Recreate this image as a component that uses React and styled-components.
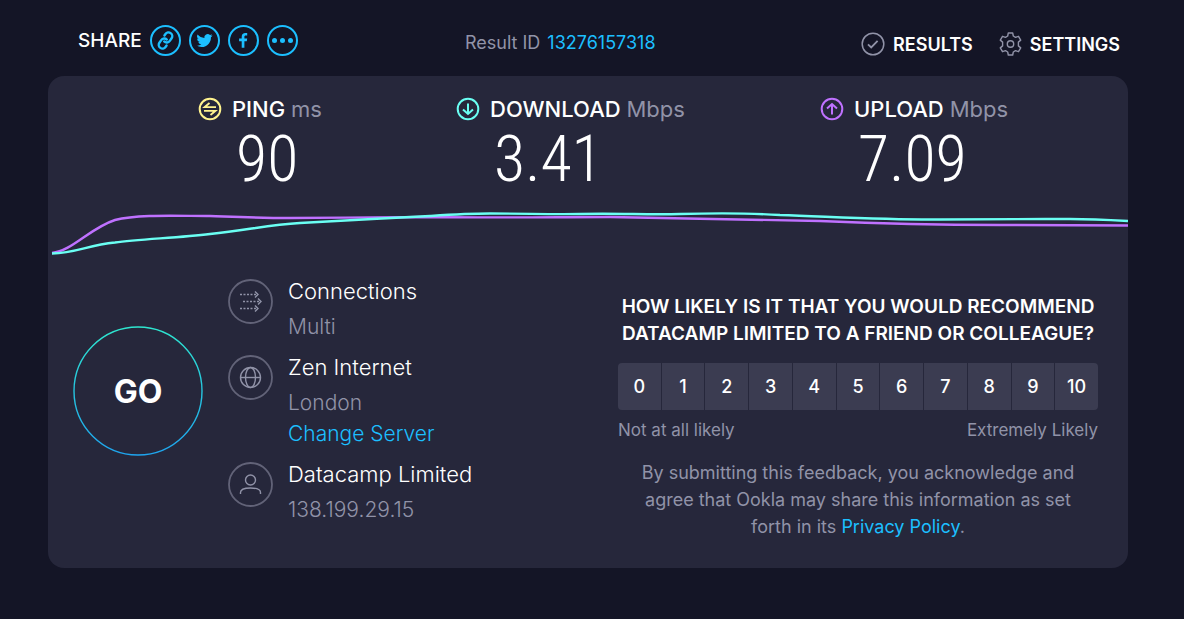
import React from "react";
import styled, { createGlobalStyle } from "styled-components";

const Global = createGlobalStyle`
  * { box-sizing: border-box; }
  body { margin: 0; background: #141526; color: #fff; font-family: Inter, "Liberation Sans", sans-serif; }
  button { font: inherit; color: inherit; background: none; border: 0; padding: 0; cursor: pointer; }
  a { color: #1cbfff; text-decoration: none; }
  h2, p { margin: 0; }
  svg { display: block; flex: none; }
`;

const Page = styled.main`
  min-height: 100vh;
  padding: 0 56px 51px 48px;
`;

const TopBar = styled.header`
  display: grid;
  grid-template-columns: 5fr auto 6fr;
  align-items: center;
  height: 76px;
  padding: 8px 8px 0 30px;
`;

const Share = styled.div`
  display: flex;
  align-items: center;
  gap: 8px;
  font-size: 19px;
  font-weight: 500;
  padding-bottom: 4px;
`;

const ShareButton = styled.button`
  width: 31px;
  height: 31px;
  color: #1cbfff;
`;

const ResultId = styled.p`
  display: flex;
  gap: 7px;
  font-size: 18px;
  color: #9193a8;
`;

const Nav = styled.nav`
  display: flex;
  justify-content: flex-end;
  gap: 26px;
  padding-top: 4px;
`;

const NavLink = styled.a`
  display: flex;
  align-items: center;
  gap: 8px;
  font-size: 18px;
  font-weight: 600;
  color: #fff;
  svg { color: #9193a8; }
`;

const Panel = styled.section`
  background: #26273b;
  border-radius: 16px;
  overflow: hidden;
  padding-bottom: 28px;
`;

const Metrics = styled.div`
  display: grid;
  grid-template-columns: 258fr 364fr 308fr;
  padding: 20px 0 0 150px;
`;

const MetricName = styled.div`
  display: flex;
  align-items: center;
  gap: 10px;
  font-size: 22px;
  line-height: 26px;
  font-weight: 500;
`;

const Unit = styled.span`
  color: #9193a8;
  font-weight: 400;
`;

const Value = styled.div`
  padding-left: 38px;
  font-family: "Roboto Condensed Light", "Roboto Condensed", Roboto, sans-serif;
  font-weight: 100;
  font-size: 64px;
  line-height: 76px;
`;

const Chart = styled.svg`
  width: 100%;
  height: 70px;
`;

const Lower = styled.div`
  display: grid;
  grid-template-columns: 180px 1fr 480px;
  padding: 1px 30px 0 0;
`;

const GoButton = styled.button`
  display: grid;
  place-items: center;
  width: 130px;
  height: 130px;
  margin: 57px 0 0 25px;
  font-size: 32px;
  font-weight: 700;
  svg, span { grid-area: 1 / 1; }
`;

const Details = styled.div`
  display: flex;
  flex-direction: column;
  gap: 10px;
  padding-top: 7px;
`;

const Detail = styled.div`
  display: flex;
  gap: 15px;
  svg { margin-top: 3px; color: #9193a8; }
`;

const DetailText = styled.div`
  font-size: 22px;
  line-height: 31px;
  font-weight: 300;
  a { font-size: 21px; }
`;

const DetailSub = styled.div`
  color: #9193a8;
  padding-top: 4px;
  font-size: 21px;
`;

const Survey = styled.div`
  text-align: center;
  padding-top: 24px;
`;

const Question = styled.h2`
  font-size: 19px;
  line-height: 27px;
  font-weight: 600;
`;

const Scale = styled.div`
  display: grid;
  grid-template-columns: repeat(11, 1fr);
  gap: 1px;
  margin-top: 16px;
  border-radius: 4px;
  overflow: hidden;
`;

const Score = styled.button`
  height: 47px;
  background: #3b3c51;
  font-size: 18px;
  font-weight: 500;
`;

const ScaleEnds = styled.div`
  display: flex;
  justify-content: space-between;
  padding-top: 8px;
  font-size: 17px;
  line-height: 24px;
  color: #9193a8;
`;

const Notice = styled.p`
  padding: 17px 16px 0;
  font-size: 18px;
  line-height: 27px;
  color: #9193a8;
`;

const ShareIcon = ({ children }) => (
  <svg width="31" height="31" viewBox="0 0 31 31" fill="none" stroke="currentColor" strokeWidth="2" aria-hidden="true">
    <circle cx="15.5" cy="15.5" r="14.5" />
    {children}
  </svg>
);

const MetricIcon = ({ color, children }) => (
  <svg width="24" height="24" viewBox="0 0 24 24" fill="none" stroke={color} strokeWidth="2" aria-hidden="true">
    <circle cx="12" cy="12" r="10.3" />
    {children}
  </svg>
);

const DetailIcon = ({ children }) => (
  <svg width="45" height="45" viewBox="0 0 45 45" fill="none" stroke="currentColor" strokeWidth="1.4" aria-hidden="true">
    <circle cx="22.5" cy="22.5" r="21.5" stroke="#626378" strokeWidth="1.8" />
    {children}
  </svg>
);

const metrics = [
  { name: "PING", unit: "ms", value: "90", color: "#fff38e",
    icon: <path d="M18 10.200H6.500L11.500 6M6 13.800h11.500L12.500 18" strokeWidth="1.8" /> },
  { name: "DOWNLOAD", unit: "Mbps", value: "3.41", color: "#6afff3",
    icon: <path d="M12 6.500v11M7 12.500l5 4.500 5-4.500" /> },
  { name: "UPLOAD", unit: "Mbps", value: "7.09", color: "#bf71ff",
    icon: <path d="M12 17.500v-11M7 11.500l5-4.500 5 4.500" /> },
];

const shares = [
  { label: "Copy link", icon: (
    <g transform="rotate(-10 15.5 15.5) translate(6.500 6.500) scale(.75)" strokeWidth="3.200" strokeLinecap="round">
      <path d="M10 13a5 5 0 0 0 7.54.54l3-3a5 5 0 0 0-7.07-7.07l-1.72 1.71" />
      <path d="M14 11a5 5 0 0 0-7.54-.54l-3 3a5 5 0 0 0 7.07 7.07l1.71-1.71" />
    </g>) },
  { label: "Share on Twitter", icon: (
    <path transform="translate(7.5 7.5) scale(.67)" fill="currentColor" stroke="none" d="M23.95 4.57a10 10 0 0 1-2.82.77 4.96 4.96 0 0 0 2.16-2.72c-.95.55-2 .95-3.13 1.18a4.92 4.92 0 0 0-8.38 4.48C7.69 8.1 4.07 6.13 1.64 3.16a4.93 4.93 0 0 0 1.52 6.57 4.9 4.9 0 0 1-2.23-.61v.06a4.92 4.92 0 0 0 3.95 4.83 5 5 0 0 1-2.21.08 4.94 4.94 0 0 0 4.6 3.42A9.87 9.87 0 0 1 0 19.54a14 14 0 0 0 7.55 2.21c9.05 0 14-7.5 14-13.98 0-.21 0-.42-.02-.63a9.94 9.94 0 0 0 2.42-2.57z" />) },
  { label: "Share on Facebook", icon: (
    <path fill="currentColor" stroke="none" d="M13.7 22.8v-6.6h-2.6v-2.8h2.6v-1.6c0-2.6 1.500-3.800 3.700-3.800.8 0 1.600.1 1.800.1v2.500h-1.400c-1.100 0-1.400.6-1.400 1.400v1.400h2.800l-.4 2.800h-2.400v6.600z" />) },
  { label: "More options", icon: (
    <g fill="currentColor" stroke="none"><circle cx="7.5" cy="15.5" r="2.5" /><circle cx="15.5" cy="15.5" r="2.5" /><circle cx="23.5" cy="15.5" r="2.5" /></g>) },
];

export default function App() {
  return (
    <Page>
      <Global />
      <TopBar>
        <Share>
          SHARE
          {shares.map((s) => (
            <ShareButton key={s.label} aria-label={s.label}><ShareIcon>{s.icon}</ShareIcon></ShareButton>
          ))}
        </Share>
        <ResultId>Result ID <a href="#result">13276157318</a></ResultId>
        <Nav>
          <NavLink href="#results">
            <svg width="24" height="24" viewBox="0 0 24 24" fill="none" stroke="currentColor" strokeWidth="1.5" aria-hidden="true">
              <circle cx="12" cy="12" r="10.8" />
              <path d="M7 12.3l3.2 3.2 6.4-6.6" strokeWidth="1.8" />
            </svg>
            RESULTS
          </NavLink>
          <NavLink href="#settings">
            <svg width="23" height="24" viewBox="0 0 23 24" fill="none" stroke="currentColor" strokeWidth="1.4" strokeLinejoin="round" aria-hidden="true">
              <path d="M9.3 1h4.4l.6 3 2.2 1.3 3-1 2.2 3.8-2.3 2v3.8l2.3 2-2.2 3.8-3-1-2.2 1.3-.6 3H9.3l-.6-3-2.2-1.3-3 1-2.2-3.8 2.3-2v-3.8l-2.3-2 2.2-3.8 3 1L8.7 4z" />
              <circle cx="11.5" cy="12" r="3.2" />
            </svg>
            SETTINGS
          </NavLink>
        </Nav>
      </TopBar>
      <Panel>
        <Metrics>
          {metrics.map((m) => (
            <div key={m.name}>
              <MetricName>
                <MetricIcon color={m.color}>{m.icon}</MetricIcon>
                <span>{m.name} <Unit>{m.unit}</Unit></span>
              </MetricName>
              <Value>{m.value}</Value>
            </div>
          ))}
        </Metrics>
        <Chart viewBox="0 198 1080 70" preserveAspectRatio="none" fill="none" strokeWidth="2.4" role="img" aria-label="Speed over time">
          <path stroke="#bf71ff" d="M4 253C24 251 42 228 67 220C90 214 130 216 162 216C190 217 210 218 242 218C290 218 330 217 382 217C450 218 510 217 562 217C630 218 700 219 772 221C840 224 900 225 952 225L1080 225.5" />
          <path stroke="#6afff3" d="M4 253.5C28 253 40 245 67 242.5C90 239 130 238 162 234C200 230 220 225 252 223C290 221 340 218 382 216C405 214.5 420 213.5 442 213.5C480 213.5 500 214.5 532 214C570 213 600 215 632 214C670 213 700 213 732 215C790 217 840 220 892 219.5C940 219 980 219 1022 219C1042 219 1062 220 1080 221" />
        </Chart>
        <Lower>
          <div>
            <GoButton>
              <svg width="130" height="130" viewBox="0 0 130 130" fill="none" aria-hidden="true">
                <defs>
                  <linearGradient id="ring" x1="0" y1="0" x2="0" y2="1">
                    <stop offset="0" stopColor="#2ee6cf" />
                    <stop offset="1" stopColor="#1ea4ee" />
                  </linearGradient>
                </defs>
                <circle cx="65" cy="65" r="64" stroke="url(#ring)" strokeWidth="1.4" />
              </svg>
              <span>GO</span>
            </GoButton>
          </div>
          <Details>
            <Detail>
              <DetailIcon>
                <path strokeDasharray="2 1.5" d="M12 15.5h16M15 22.5h16M12 29.5h16" />
                <path d="M27 12.5l3 3-3 3M30 19.5l3 3-3 3M27 26.5l3 3-3 3" />
              </DetailIcon>
              <DetailText>Connections<DetailSub>Multi</DetailSub></DetailText>
            </Detail>
            <Detail>
              <DetailIcon>
                <circle cx="22.5" cy="22.5" r="10" />
                <ellipse cx="22.5" cy="22.5" rx="5" ry="10" />
                <path d="M12.5 22.5h20" />
              </DetailIcon>
              <DetailText>Zen Internet<DetailSub>London</DetailSub><a href="#server">Change Server</a></DetailText>
            </Detail>
            <Detail>
              <DetailIcon>
                <circle cx="22.5" cy="18" r="5" />
                <path d="M12.5 32v-1.5c0-3 3-4.500 10-4.500s10 1.500 10 4.500V32" />
              </DetailIcon>
              <DetailText>Datacamp Limited<DetailSub>138.199.29.15</DetailSub></DetailText>
            </Detail>
          </Details>
          <Survey>
            <Question>HOW LIKELY IS IT THAT YOU WOULD RECOMMEND DATACAMP LIMITED TO A FRIEND OR COLLEAGUE?</Question>
            <Scale>{Array.from({ length: 11 }, (_, n) => <Score key={n}>{n}</Score>)}</Scale>
            <ScaleEnds><span>Not at all likely</span><span>Extremely Likely</span></ScaleEnds>
            <Notice>By submitting this feedback, you acknowledge and agree that Ookla may share this information as set forth in its <a href="#privacy">Privacy Policy</a>.</Notice>
          </Survey>
        </Lower>
      </Panel>
    </Page>
  );
}
